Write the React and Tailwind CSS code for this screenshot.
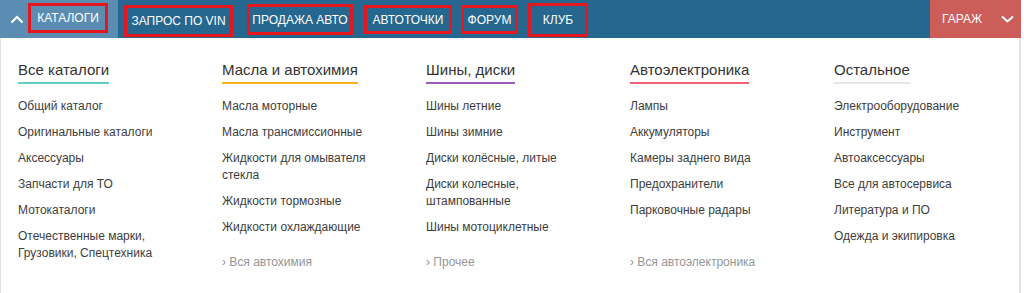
import React from "react";

const columns = [
  {
    title: "Все каталоги",
    color: "border-[#5fd0bf]",
    items: ["Общий каталог", "Оригинальные каталоги", "Аксессуары", "Запчасти для ТО", "Мотокаталоги", "Отечественные марки, Грузовики, Спецтехника"],
  },
  {
    title: "Масла и автохимия",
    color: "border-[#f6b21b]",
    items: ["Масла моторные", "Масла трансмиссионные", "Жидкости для омывателя стекла", "Жидкости тормозные", "Жидкости охлаждающие"],
    link: "Вся автохимия",
  },
  {
    title: "Шины, диски",
    color: "border-[#9c5bb5]",
    items: ["Шины летние", "Шины зимние", "Диски колёсные, литые", "Диски колесные, штампованные", "Шины мотоциклетные"],
    link: "Прочее",
  },
  {
    title: "Автоэлектроника",
    color: "border-[#f2607a]",
    items: ["Лампы", "Аккумуляторы", "Камеры заднего вида", "Предохранители", "Парковочные радары"],
    link: "Вся автоэлектроника",
  },
  {
    title: "Остальное",
    color: "border-[#e6e6e6]",
    items: ["Электрооборудование", "Инструмент", "Автоаксессуары", "Все для автосервиса", "Литература и ПО", "Одежда и экипировка"],
  },
];

const navItems = [
  { label: "ЗАПРОС ПО VIN", cls: "w-[109px] ml-[6px] mt-[5px] h-[32px]" },
  { label: "ПРОДАЖА АВТО", cls: "w-[106px] ml-[14px] mt-[4px] h-[31px]" },
  { label: "АВТОТОЧКИ", cls: "w-[88px] ml-[11px] mt-[5px] h-[29px]" },
  { label: "ФОРУМ", cls: "w-[57px] ml-[9px] mt-[5px] h-[29px]" },
  { label: "КЛУБ", cls: "w-[60px] ml-[10px] mt-[3px] h-[34px]" },
];

export default function App() {
  return (
    <div className="w-[1024px] h-[293px] overflow-hidden bg-white font-['Liberation_Sans',Arial,sans-serif]">
      <div className="w-[1021px]">
        <nav className="flex h-[38px] bg-[#25678f] text-white text-[12px]">
          <div className="flex h-full w-[118px] bg-[#5b8db3]">
            <div className="flex items-center pl-[10px] w-[28px]">
              <svg width="14" height="9" viewBox="0 0 14 9" fill="none">
                <polyline points="1.5,7.5 7,2 12.5,7.5" stroke="white" strokeWidth="2" />
              </svg>
            </div>
            <div className="mt-[3px] h-[30px] w-[80px] border-[3px] border-[#e5161e] flex items-center justify-center">
              КАТАЛОГИ
            </div>
          </div>
          {navItems.map((n) => (
            <div key={n.label} className={`${n.cls} border-[3px] border-[#e5161e] flex items-center justify-center`}>
              {n.label}
            </div>
          ))}
          <div className="ml-auto flex h-full w-[91px] items-center bg-[#cd5d59] pl-[12px]">
            <span>ГАРАЖ</span>
            <svg className="ml-[19px]" width="13" height="8" viewBox="0 0 13 8" fill="none">
              <polyline points="1,1.5 6.5,6.5 12,1.5" stroke="white" strokeWidth="2" />
            </svg>
          </div>
        </nav>
        <div className="h-[255px] overflow-hidden border-l border-r-2 border-[#e2e2e2] pl-[17px] pt-[20px]">
          <div className="flex min-h-[213px]">
            {columns.map((c) => (
              <div key={c.title} className="flex w-[204px] shrink-0 flex-col pr-[24px]">
                <div>
                  <span className={`inline-block border-b-2 ${c.color} pb-[1px] text-[15px] leading-[22px] text-[#333]`}>
                    {c.title}
                  </span>
                </div>
                <ul className="mt-[14px] flex flex-col gap-[9px] text-[12px] leading-[17px] text-[#3d3d3d]">
                  {c.items.map((i) => (
                    <li key={i} className="leading-[17px]">{i}</li>
                  ))}
                </ul>
                {c.link && (
                  <div className="mt-auto text-[12px] leading-[17px] text-[#959595]">› {c.link}</div>
                )}
              </div>
            ))}
          </div>
        </div>
      </div>
    </div>
  );
}
